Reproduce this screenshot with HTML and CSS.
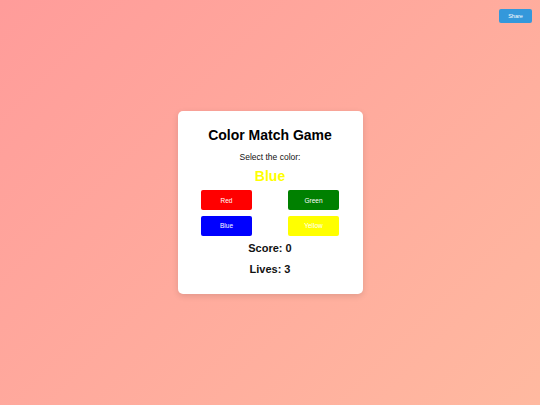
FILE: index.html
```html
<!DOCTYPE html>
<html lang="en">
<head>
<meta charset="utf-8">
<title>Color Match Game</title>
<link rel="stylesheet" href="styles.css">
</head>
<body>
<button class="share">Share</button>
<main class="card">
  <h1 class="title">Color Match Game</h1>
  <p class="prompt">Select the color:</p>
  <div class="target">Blue</div>
  <div class="choices">
    <button class="choice red">Red</button>
    <button class="choice green">Green</button>
    <button class="choice blue">Blue</button>
    <button class="choice yellow">Yellow</button>
  </div>
  <h2 class="stat score">Score: 0</h2>
  <h2 class="stat lives">Lives: 3</h2>
</main>
</body>
</html>
```
FILE: styles.css
```css
* { box-sizing: border-box; }
html, body { margin: 0; padding: 0; }
body {
  min-height: 100vh;
  display: flex;
  align-items: center;
  justify-content: center;
  font-family: "Liberation Sans", Arial, sans-serif;
  background: linear-gradient(135deg, #ff9c9a 0%, #ffb9a0 100%);
}
.share {
  position: absolute;
  top: 9px;
  right: 8px;
  width: 33px;
  height: 14px;
  padding: 0;
  border: none;
  border-radius: 2px;
  background: #3498db;
  color: #fff;
  font-family: "Liberation Sans", Arial, sans-serif;
  font-size: 5.5px;
}
.card {
  width: 185px;
  background: #fff;
  border-radius: 5px;
  box-shadow: 0 2px 6px rgba(0, 0, 0, 0.12);
  padding: 16px 10px 18px;
  text-align: center;
  display: flex;
  flex-direction: column;
  align-items: center;
}
.title {
  margin: 0;
  font-size: 14px;
  line-height: 16px;
  font-weight: bold;
  color: #000;
}
.prompt {
  margin: 9px 0 0;
  font-size: 8.5px;
  line-height: 10px;
  color: #111;
}
.target {
  margin-top: 6px;
  font-size: 14px;
  line-height: 16px;
  font-weight: bold;
  color: #ffff00;
}
.choices {
  margin-top: 6px;
  display: grid;
  grid-template-columns: 51px 51px;
  column-gap: 36px;
  row-gap: 5.5px;
}
.choice {
  height: 20px;
  padding: 0;
  border: none;
  border-radius: 2px;
  color: #fff;
  font-family: "Liberation Sans", Arial, sans-serif;
  font-size: 6.5px;
}
.red { background: #ff0000; }
.green { background: #008000; }
.blue { background: #0000ff; }
.yellow { background: #ffff00; }
.stat {
  margin: 0;
  font-size: 11px;
  line-height: 13px;
  font-weight: bold;
  color: #111;
}
.score { margin-top: 6px; }
.lives { margin-top: 8.5px; }
```
